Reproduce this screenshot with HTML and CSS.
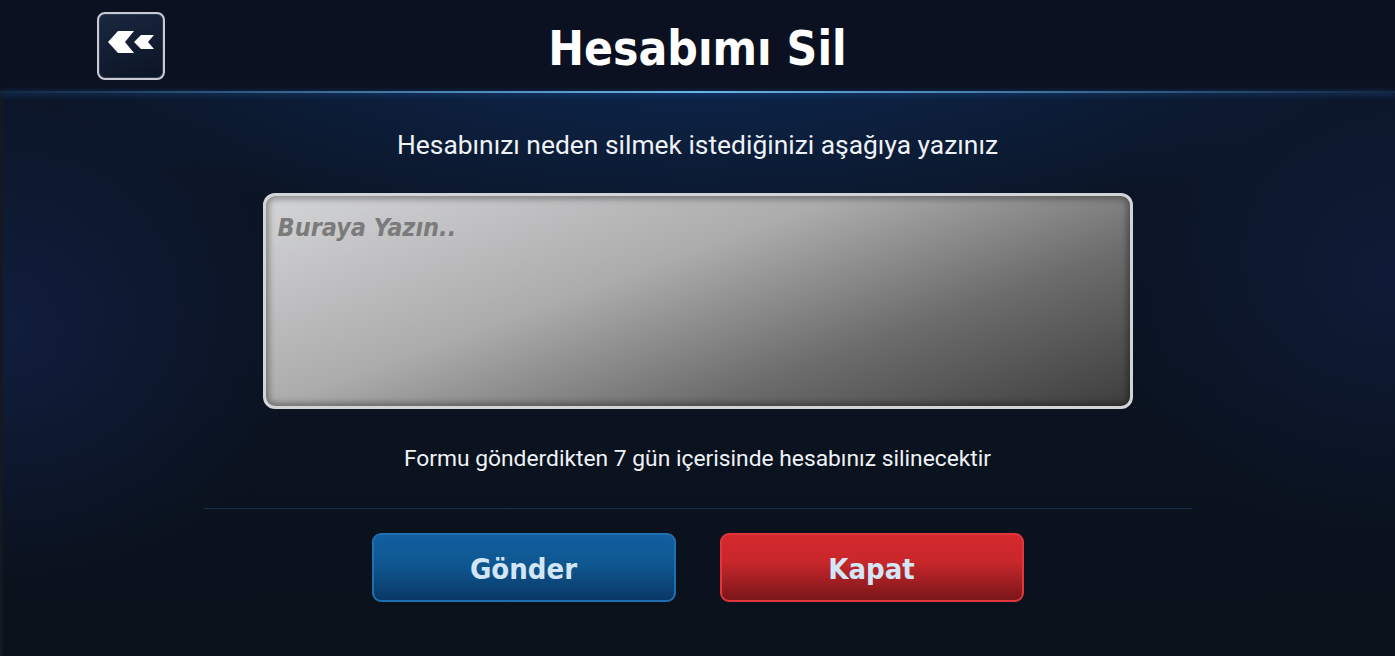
FILE: index.html
```html
<!DOCTYPE html>
<html lang="tr">
<head>
	<meta charset="UTF-8">
	<title>Hesabımı Sil</title>
	<link rel="stylesheet" href="styles.css">
</head>
<body>
	<div id="screen">
		<div id="topbar">
			<button class="back" title="Geri">
				<svg width="46" height="22" viewBox="0 0 46 22">
					<path d="M10 0 H26 L17 11 L26 22 H10 L0 11 Z" fill="#fff"/>
					<path d="M33 4 H46 L40 11 L46 18 H33 L26 11 Z" fill="#fff"/>
				</svg>
			</button>
			<h1>Hesabımı Sil</h1>
			<div></div>
		</div>
		<div class="glow"></div>

		<div id="content">
			<p class="info top">Hesabınızı neden silmek istediğinizi aşağıya yazınız</p>
			<textarea id="reason" placeholder="Buraya Yazın.."></textarea>
			<p class="info bottom">Formu gönderdikten 7 gün içerisinde hesabınız silinecektir</p>
			<div class="sep"></div>
			<div class="buttons">
				<button class="btn send">Gönder</button>
				<button class="btn close">Kapat</button>
			</div>
		</div>
	</div>
</body>
</html>
```

FILE: styles.css
```css
* {
	box-sizing: border-box;
}

body {
	margin: 0;
	background: #0a101b;
	font-family: Roboto, "Liberation Sans", Arial, sans-serif;
}

#screen {
	height: 656px;
	overflow: hidden;
	box-shadow: inset 3px 0 0 #141820;
	background:
		radial-gradient(ellipse 700px 260px at 50% 0, rgba(14, 50, 105, 0.75), rgba(14, 50, 105, 0) 100%),
		radial-gradient(ellipse 300px 260px at 0 330px, rgba(20, 35, 80, 0.6), rgba(20, 35, 80, 0) 100%),
		radial-gradient(ellipse 300px 260px at 100% 280px, rgba(20, 35, 80, 0.45), rgba(20, 35, 80, 0) 100%),
		linear-gradient(#0c1628, #0a111b);
}

#topbar {
	height: 91px;
	background: #0b1120;
	display: grid;
	grid-template-columns: 68px 1fr 68px;
	align-items: center;
	padding: 0 97px;
}

.back {
	width: 68px;
	height: 68px;
	margin-top: 1px;
	border: 2px solid #c8ccd2;
	border-radius: 8px;
	background: linear-gradient(160deg, #1a2740, #0b1424);
	box-shadow: inset 0 0 0 1px #2c3a52;
	display: flex;
	align-items: center;
	justify-content: center;
	padding: 0 0 8px 0;
}

h1 {
	margin: 0;
	text-align: center;
	color: #fff;
	font-family: "DejaVu Sans Condensed", "DejaVu Sans", sans-serif;
	font-stretch: condensed;
	font-weight: bold;
	font-size: 47.5px;
	line-height: 60px;
	margin-top: 6px;
}

.glow {
	height: 2px;
	background: linear-gradient(90deg, rgba(60, 130, 200, 0.15), #6ab4ea 50%, rgba(60, 130, 200, 0.15));
	box-shadow: 0 1px 6px rgba(40, 120, 220, 0.6);
}

#content {
	display: flex;
	flex-direction: column;
	align-items: center;
}

.info {
	margin: 0;
	color: #eef2f7;
}

.top {
	font-size: 26.4px;
	line-height: 30px;
	margin-top: 37px;
}

.bottom {
	font-size: 22.8px;
	line-height: 28px;
}

textarea {
	width: 870px;
	height: 216px;
	margin: 33px 0 36px;
	border: 3px solid #d2d4d8;
	border-radius: 12px;
	background: linear-gradient(160deg, #d4d5d7 0%, #acacad 40%, #6c6c6c 70%, #3e3e3e 100%);
	box-shadow: inset 0 0 6px 3px rgba(0, 0, 0, 0.35);
	padding: 17px 12px;
	resize: none;
	outline: none;
	font-family: "DejaVu Sans Condensed", "DejaVu Sans", sans-serif;
	font-size: 25px;
	font-weight: bold;
	font-style: italic;
	color: #333;
}

textarea::placeholder {
	color: #7b7b7b;
}

.sep {
	width: 988px;
	height: 1px;
	margin-top: 35px;
	background: #15314f;
}

.buttons {
	display: flex;
	gap: 44px;
	margin-top: 24px;
}

.btn {
	width: 304px;
	height: 69px;
	border-radius: 9px;
	padding-top: 3px;
	font-family: "DejaVu Sans Condensed", "DejaVu Sans", sans-serif;
	font-stretch: condensed;
	font-weight: bold;
	font-size: 29px;
	color: #d2e6f6;
}

.send {
	border: 2px solid #1f6fb3;
	background: linear-gradient(#115f9f, #0f5791 45%, #0a3866);
}

.close {
	border: 2px solid #e2363a;
	background: linear-gradient(#d4292d, #c9272b 40%, #7a1619);
}
```
